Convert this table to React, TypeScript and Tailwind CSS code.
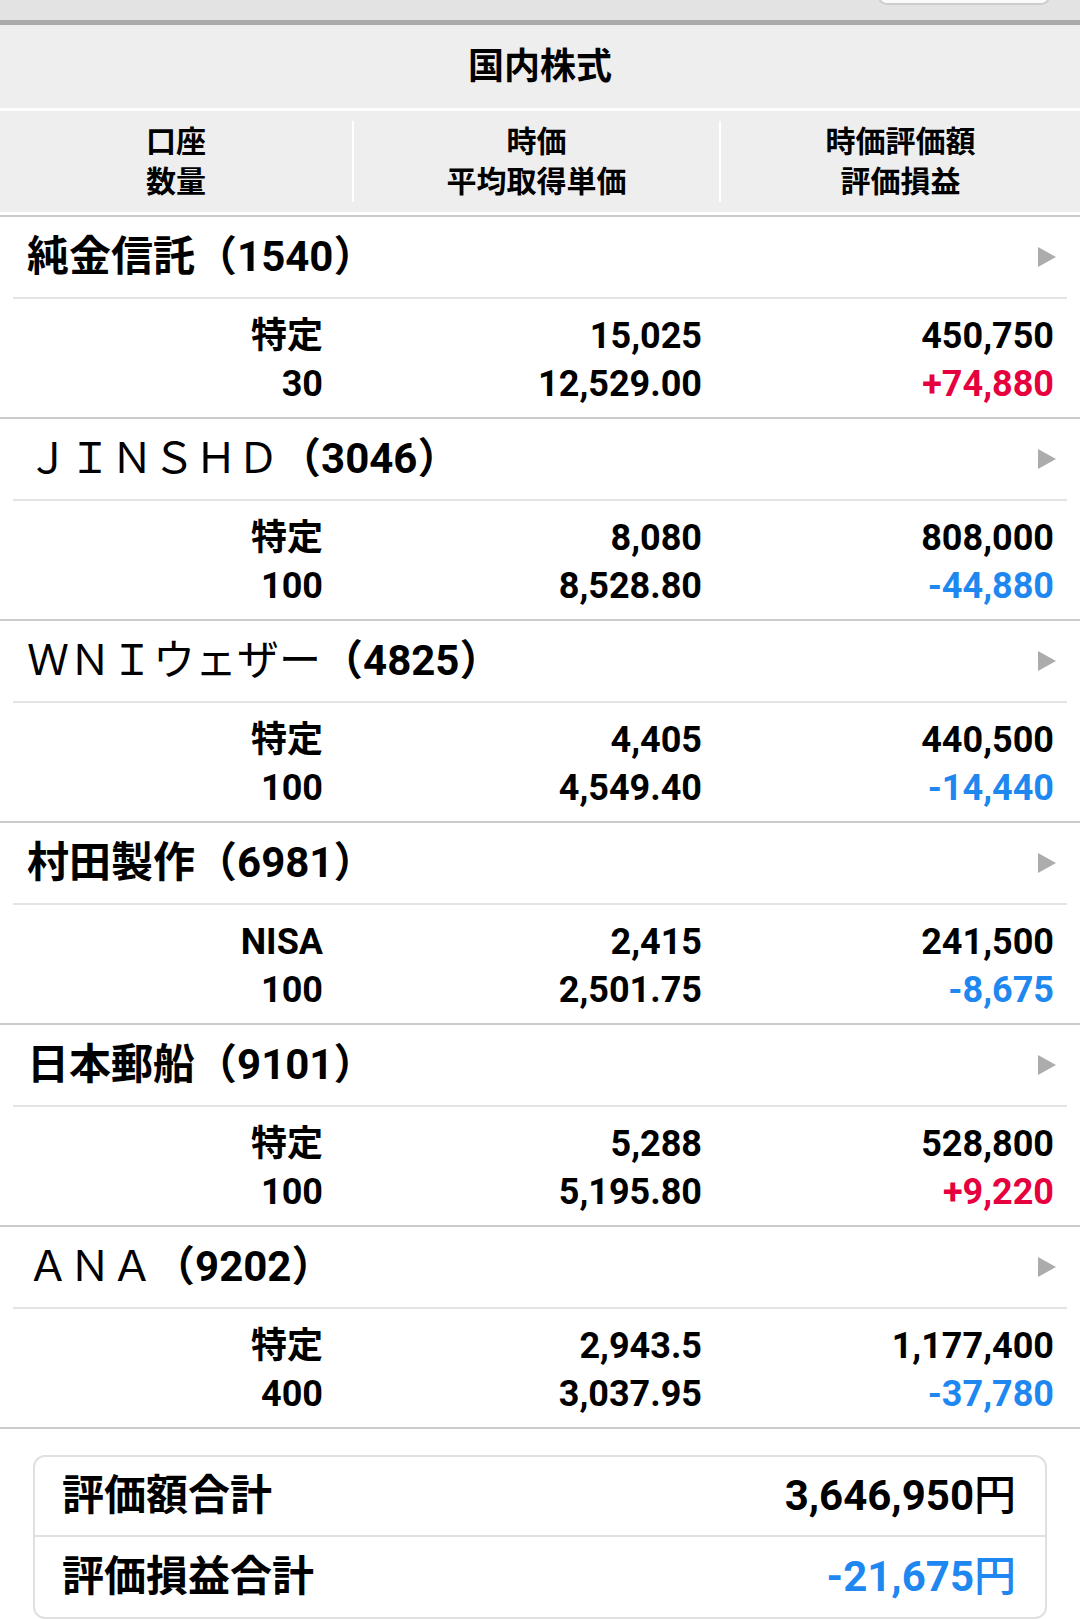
import React from "react";

type Part = { t: string; n?: boolean };
type Stock = {
  name: Part[];
  code: string;
  acct: string;
  qty: string;
  price: string;
  avg: string;
  value: string;
  pl: string;
  up: boolean;
};

const stocks: Stock[] = [
  { name: [{ t: "純金信託" }], code: "1540", acct: "特定", qty: "30", price: "15,025", avg: "12,529.00", value: "450,750", pl: "+74,880", up: true },
  { name: [{ t: "ＪＩＮＳＨＤ", n: true }], code: "3046", acct: "特定", qty: "100", price: "8,080", avg: "8,528.80", value: "808,000", pl: "-44,880", up: false },
  { name: [{ t: "ＷＮＩウェザー", n: true }], code: "4825", acct: "特定", qty: "100", price: "4,405", avg: "4,549.40", value: "440,500", pl: "-14,440", up: false },
  { name: [{ t: "村田製作" }], code: "6981", acct: "NISA", qty: "100", price: "2,415", avg: "2,501.75", value: "241,500", pl: "-8,675", up: false },
  { name: [{ t: "日本郵船" }], code: "9101", acct: "特定", qty: "100", price: "5,288", avg: "5,195.80", value: "528,800", pl: "+9,220", up: true },
  { name: [{ t: "ＡＮＡ", n: true }], code: "9202", acct: "特定", qty: "400", price: "2,943.5", avg: "3,037.95", value: "1,177,400", pl: "-37,780", up: false },
];

function Arrow() {
  return (
    <svg width="18" height="20" viewBox="0 0 18 20">
      <polygon points="0,0 18,10 0,20" fill="#acacac" />
    </svg>
  );
}

function Row({ s }: { s: Stock }) {
  return (
    <div className="border-b-2 border-[#cbcbcb]">
      <div className="h-[80px] flex items-center justify-between pl-[27px] pr-[24px]">
        <div className="text-[42px] font-bold text-black leading-none whitespace-nowrap">
          {s.name.map((p, i) => (
            <span key={i} className={p.n ? "font-normal" : "font-bold"}>
              {p.t}
            </span>
          ))}
          <span>（{s.code}）</span>
        </div>
        <Arrow />
      </div>
      <div className="mx-[13px] h-[2px] bg-[#e4e4e4]" />
      <div className="h-[118px] pt-[13px] flex text-[36px] leading-[48px] font-bold text-black">
        <div className="w-[323px] text-right">
          <div>{s.acct}</div>
          <div>{s.qty}</div>
        </div>
        <div className="w-[379px] text-right">
          <div>{s.price}</div>
          <div>{s.avg}</div>
        </div>
        <div className="w-[352px] text-right">
          <div>{s.value}</div>
          <div className={s.up ? "text-[#e6003e]" : "text-[#1e87f0]"}>{s.pl}</div>
        </div>
      </div>
    </div>
  );
}

export default function App() {
  return (
    <div
      className="w-[1080px] h-[1619px] overflow-hidden bg-white text-black"
      style={{ fontFamily: "Roboto, 'Noto Sans CJK JP', sans-serif" }}
    >
      <div className="h-[25px] bg-[#e3e3e3] border-b-[5px] border-[#aaaaaa] flex justify-end pr-[30px] overflow-hidden">
        <div className="-mt-[12px] w-[172px] h-[17px] rounded-[10px] bg-[#fafafa] border-2 border-[#cdcdcd]" />
      </div>
      <div className="h-[86px] bg-[#eeeeee] border-b-[3px] border-white flex items-center justify-center text-[36px] font-bold leading-none">
        国内株式
      </div>
      <div className="h-[104px] bg-[#eeeeee] border-b-[3px] border-white flex py-[10px] text-[30px] font-bold leading-[40px]">
        <div className="w-[352px] flex flex-col items-center justify-center">
          <div>口座</div>
          <div>数量</div>
        </div>
        <div className="w-[2px] bg-white" />
        <div className="w-[365px] flex flex-col items-center justify-center">
          <div>時価</div>
          <div>平均取得単価</div>
        </div>
        <div className="w-[2px] bg-white" />
        <div className="flex-1 flex flex-col items-center justify-center">
          <div>時価評価額</div>
          <div>評価損益</div>
        </div>
      </div>
      <div className="h-[2px] bg-[#cbcbcb]" />
      {stocks.map((s) => (
        <Row key={s.code} s={s} />
      ))}
      <div className="mt-[26px] mx-[33px] border-2 border-[#e0e0e0] rounded-[12px] text-[42px] font-bold leading-none">
        <div className="h-[80px] flex items-center justify-between pl-[27px] pr-[29px] border-b-2 border-[#e0e0e0]">
          <span>評価額合計</span>
          <span>
            3,646,950<span className="font-medium">円</span>
          </span>
        </div>
        <div className="h-[80px] flex items-center justify-between pl-[27px] pr-[29px]">
          <span>評価損益合計</span>
          <span className="text-[#1e87f0]">
            -21,675<span className="font-medium">円</span>
          </span>
        </div>
      </div>
    </div>
  );
}
